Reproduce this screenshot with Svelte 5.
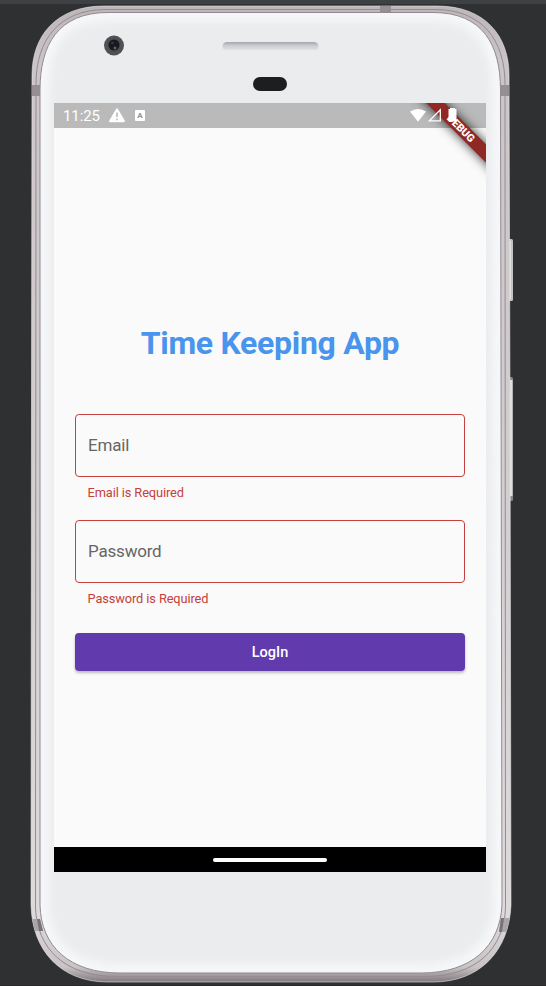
<script>
  const fields = [
    { label: 'Email', error: 'Email is Required' },
    { label: 'Password', error: 'Password is Required' }
  ];
  const outer =
    'M104 6H437C485 6 509 36 509 75L510 400L511 905C509 950 481 982 433 982H108C60 982 32 950 31 905L31.5 400L32 75C32 36 56 6 104 6Z';
  const middle =
    'M106 9.5H435C482 9.5 505 40 505 84L505.500 908C504 948 477 976.500 425 976.500H116C64 976.500 37 948 35.500 908L36 84C36 40 59 9.500 106 9.500Z';
  const inner =
    'M108 12.500H433C483 12.500 500.500 45 500.500 90L502 905C500 946 472 973 421 973H120C69 973 41 946 40 905V90C40 45 58 12.500 108 12.500Z';
</script>

<main class="stage">
  <svg class="shell" viewBox="0 0 546 986" aria-hidden="true">
    <defs>
      <linearGradient id="rim" x1="0" y1="0" x2="0" y2="1">
        <stop offset="0" stop-color="#bdb6b9" />
        <stop offset=".06" stop-color="#cbc5c8" />
        <stop offset=".5" stop-color="#d3ced0" />
        <stop offset=".93" stop-color="#dedadb" />
        <stop offset=".985" stop-color="#c9c3c5" />
        <stop offset="1" stop-color="#817a7d" />
      </linearGradient>
      <linearGradient id="speaker" x1="0" y1="0" x2="0" y2="1">
        <stop offset="0" stop-color="#a5a6ae" />
        <stop offset=".4" stop-color="#cbccd1" />
        <stop offset=".8" stop-color="#dcdde0" />
        <stop offset="1" stop-color="#f2f2f4" />
      </linearGradient>
      <clipPath id="face"><path d={inner} /></clipPath>
      <clipPath id="body"><path d={outer} /></clipPath>
      <filter id="soft"><feGaussianBlur stdDeviation="4" /></filter>
    </defs>
    <rect width="546" height="4" fill="#3d4143" />
    <rect y="985" width="546" height="1" fill="#292729" />
    <rect x="508" y="239" width="5" height="62" rx="1.500" fill="#bfc3c2" />
    <rect x="510" y="241" width="1" height="58" fill="#dfe1df" />
    <rect x="508" y="377" width="5" height="124" rx="1.500" fill="#858988" />
    <rect x="510" y="380" width="2.500" height="116" fill="#dcdfdb" />
    <path d={outer} fill="url(#rim)" />
    <path d={outer} fill="none" stroke="#eae6e7" stroke-width="1" opacity=".6" />
    <path d={middle} fill="none" stroke="#958b90" stroke-width="1" />
    <path d={inner} fill="#ebecee" />
    <g clip-path="url(#face)">
      <path d={inner} fill="none" stroke="#f6f7f9" stroke-width="18" filter="url(#soft)" />
    </g>
    <path d={inner} fill="none" stroke="#91898e" stroke-width="1" />
    <g clip-path="url(#body)" fill="#958f93">
      <path d="M31 85H40V96H31ZM501 85H510V96H501ZM380 6H391V12H380Z" />
      <path d="M30 919H40L43 931H33ZM501 918H511L508 932H499Z" fill="#aaa5a8" />
      <path d="M37 919H40L43 931H39ZM501 918H504L502 932H499Z" fill="#77727a" />
    </g>
    <circle cx="114" cy="45.500" r="10" fill="#4d4f53" />
    <circle cx="114" cy="45.500" r="8.500" fill="none" stroke="#5c5e63" stroke-dasharray="1 2" />
    <circle cx="114" cy="45" r="5.500" fill="#17191f" />
    <circle cx="112.500" cy="43" r="1.300" fill="#343950" />
    <circle cx="115" cy="48" r="1.500" fill="#66643b" />
    <rect x="222.500" y="42" width="96" height="9" rx="4.500" fill="url(#speaker)" />
    <rect x="253" y="77" width="34" height="14" rx="7" fill="#1c1e20" />
  </svg>

  <section class="screen">
    <header class="status">
      <span class="clock">11:25</span>
      <svg class="warn" viewBox="0 0 16 15"><path fill="#fff" fill-rule="evenodd" d="M7.200.7Q8 -.2 8.800.7L15.700 12.500Q16.200 14 15 14.200H1Q-.2 14 .3 12.500ZM7.200 4.500V9H8.800V4.500ZM7.200 10.500V12.200H8.800V10.500Z" /></svg>
      <span class="badge">A</span>
      <svg class="signals" viewBox="0 0 48 15">
        <path d="M0 3.500Q8 -1.700 16 3.500L8 13.800Z" fill="#fff" />
        <path d="M30.300 1.800V12.800H19.300Z" fill="none" stroke="#fff" stroke-width="1.300" />
        <path d="M40 1V0H45V1H46.500V12.500Q46.500 13.500 45.500 13.500H39.500Q38.500 13.500 38.500 12.500V1Z" fill="#fff" />
      </svg>
    </header>

    <form class="login" novalidate>
      <h1>Time Keeping App</h1>
      {#each fields as field}
        <div class="field">
          <div class="box">{field.label}</div>
          <p class="error">{field.error}</p>
        </div>
      {/each}
      <button type="button">LogIn</button>
    </form>

    <footer class="nav"><span></span></footer>
    <div class="debug">DEBUG</div>
  </section>
</main>

<style>
  :global(body) {
    background: #2e3032;
  }
  .stage {
    position: relative;
    box-sizing: border-box;
    width: 546px;
    height: 986px;
    padding: 103px 60px 114px 54px;
    overflow: hidden;
    background: #2e3032;
    font-family: Roboto, 'Liberation Sans', sans-serif;
  }
  .shell {
    position: absolute;
    inset: 0;
    width: 546px;
    height: 986px;
  }
  .screen {
    position: relative;
    display: flex;
    flex-direction: column;
    width: 432px;
    height: 769px;
    overflow: hidden;
    background: #fafafa;
  }
  .status {
    position: relative;
    z-index: 2;
    display: flex;
    align-items: center;
    box-sizing: border-box;
    height: 25px;
    padding: 0 28px 0 9px;
    color: #fff;
  }
  .screen::before {
    content: '';
    position: absolute;
    inset: 0 0 auto;
    height: 25px;
    background: #bababa;
  }
  .clock {
    width: 46px;
    font-size: 15px;
    line-height: 26px;
    letter-spacing: -0.1px;
  }
  .warn {
    width: 16px;
    height: 15px;
  }
  .badge {
    width: 10px;
    height: 11px;
    margin: 0 0 0 10px;
    border-radius: 1px;
    background: #fff;
    color: #999;
    font-size: 8px;
    font-weight: 900;
    line-height: 11px;
    text-align: center;
  }
  .signals {
    flex: none;
    width: 48px;
    height: 15px;
    margin-left: auto;
  }
  .debug {
    position: absolute;
    z-index: 1;
    left: 337px;
    top: 18.500px;
    width: 140px;
    height: 12.700px;
    background: #8f2926;
    box-shadow: 0 0 11px rgba(0, 0, 0, 0.8);
    color: #fff;
    font-size: 10.700px;
    font-weight: 900;
    line-height: 13px;
    text-align: center;
    transform: rotate(45deg);
  }
  .login {
    display: flex;
    flex: 1;
    flex-direction: column;
    padding: 195px 21px 0;
  }
  h1 {
    margin: 0 0 51px;
    color: #4994ec;
    font-size: 32px;
    font-weight: 700;
    line-height: 41px;
    letter-spacing: -0.300px;
    text-align: center;
    white-space: nowrap;
  }
  .field {
    height: 106px;
  }
  h1 + .field {
    margin-top: -1px;
  }
  .box {
    box-sizing: border-box;
    height: 63px;
    padding: 0 12px;
    border: 1.300px solid #c5413b;
    border-radius: 4px;
    color: #666;
    font-size: 17px;
    line-height: 61px;
    letter-spacing: -0.200px;
  }
  .error {
    margin: 7px 12.500px 0;
    color: #c5413b;
    font-size: 12.800px;
    line-height: 17px;
    letter-spacing: -0.100px;
  }
  button {
    height: 38px;
    margin-top: 7px;
    padding: 1px 0 0;
    border: 0;
    border-radius: 4px;
    background: #613bae;
    box-shadow: 0 2px 3px rgba(0, 0, 0, 0.25);
    color: #fff;
    font: 500 14.500px/37px Roboto, sans-serif;
  }
  .nav {
    display: flex;
    align-items: center;
    justify-content: center;
    height: 25px;
    background: #000;
  }
  .nav span {
    width: 114px;
    height: 4px;
    border-radius: 2px;
    background: #fff;
  }
</style>
